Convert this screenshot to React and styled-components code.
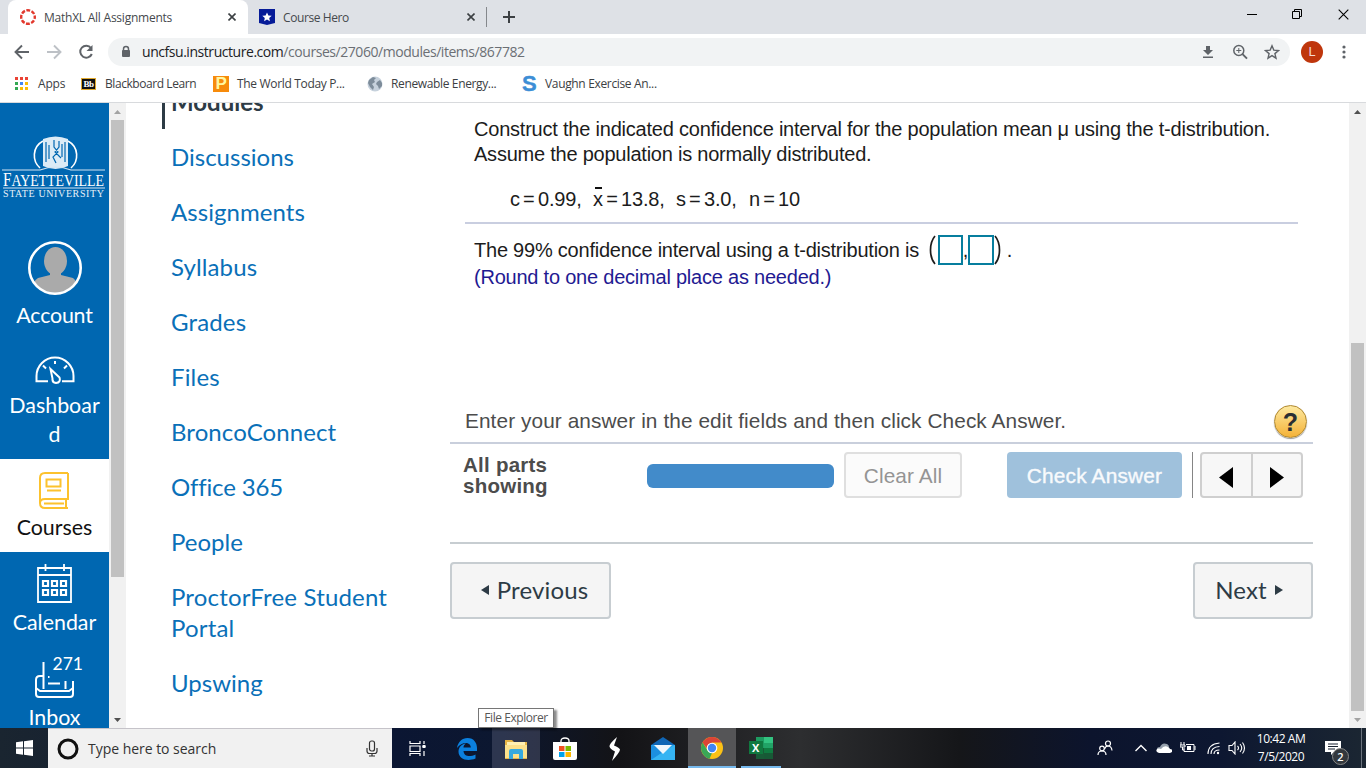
import React from 'react'
import styled, { createGlobalStyle } from 'styled-components'

const GlobalStyle = createGlobalStyle`
    * { box-sizing: border-box; }
    body {
        margin: 0;
        overflow: hidden;
        background: #fff;
    }
    button { font: inherit; margin: 0; padding: 0; }
    svg { display: block; flex: none; }
`
const Screen = styled.div`
    display: flex;
    flex-direction: column;
    width: 1366px;
    height: 768px;
    overflow: hidden;
    font-family: "Open Sans", "Noto Sans", sans-serif;
    white-space: nowrap;
`

/* browser */
const TabStrip = styled.header`
    display: flex;
    height: 34px;
    background: #dee1e6;
`
const Tab = styled.div`
    display: flex;
    align-items: center;
    width: ${p => p.$width}px;
    height: 34px;
    padding: 0 ${p => p.$active ? 12 : 11}px 0 ${p => p.$active ? 12 : 11}px;
    margin-left: ${p => p.$active ? 8 : 0}px;
    border-radius: 8px 8px 0 0;
    background: ${p => p.$active ? '#fff' : 'transparent'};
    color: #45494d;
    font-size: 12px;
    letter-spacing: ${p => p.$spacing}px;
`
const TabTitle = styled.span`
    flex: 1;
    margin-left: 8px;
`
const NewTab = styled.div`
    display: flex;
    align-items: center;
    height: 20px;
    margin-top: 7px;
    padding-left: 16px;
    border-left: 1px solid #85888c;
`
const WindowButtons = styled.div`
    display: flex;
    gap: 35px;
    margin-left: auto;
    padding: 9px 17px 0 0;
`
const Toolbar = styled.div`
    display: flex;
    align-items: center;
    height: 36px;
    padding: 0 14px;
`
const NavButtons = styled.div`
    display: flex;
    width: 94px;
    gap: 16px;
`
const AddressBar = styled.div`
    display: flex;
    align-items: center;
    width: 1182px;
    height: 28px;
    padding: 0 10px 0 12px;
    border-radius: 14px;
    background: #f1f3f4;
    color: #6b6f74;
    font-size: 14px;
    line-height: 18px;
    letter-spacing: -.45px;
    b { color: #202124; font-weight: 400; }
`
const Url = styled.span`
    flex: 1;
    margin: 0 0 1px 10px;
`
const AddressActions = styled.div`
    display: flex;
    gap: 16px;
`
const Avatar = styled.div`
    width: 22px;
    height: 22px;
    margin: 0 13px 0 11px;
    border-radius: 50%;
    background: #bf360c;
    color: #f3dcd4;
    font: 13px/22px Roboto, sans-serif;
    text-align: center;
`
const Bookmarks = styled.div`
    display: flex;
    align-items: center;
    height: 33px;
    padding: 0 0 5px 15px;
    border-bottom: 1px solid #d8dadd;
`
const Bookmark = styled.div`
    display: flex;
    align-items: center;
    gap: ${p => p.$gap || 8}px;
    width: ${p => p.$width}px;
    color: #3c4043;
    font-size: 12px;
    letter-spacing: ${p => p.$spacing}px;
`
const BbLogo = styled.span`
    width: 15px;
    height: 12px;
    border: 1px solid #e0a92e;
    background: #111;
    color: #fff;
    font: bold 9px/10px "Liberation Serif", serif;
    letter-spacing: -.5px;
    text-align: center;
`
const PearsonLogo = styled.span`
    width: 16px;
    height: 16px;
    background: #f78b0b;
    color: #fff7a0;
    font: bold 17px/16px "Liberation Sans", sans-serif;
    text-align: center;
`
const SLogo = styled.span`
    width: 15px;
    color: #3d8ed6;
    font: bold 22px/18px "Liberation Sans", sans-serif;
    letter-spacing: 0;
    -webkit-text-stroke: .4px #3d8ed6;
`

/* page */
const Page = styled.div`
    display: flex;
    height: 625px;
    overflow: hidden;
`
const GlobalNav = styled.nav`
    width: 109px;
    background: #0067b1;
    color: #fff;
    font: 21.4px/29px Lato, sans-serif;
    text-align: center;
`
const University = styled.div`
    height: 131px;
    padding-top: 33px;
    svg { margin: auto; }
`
const NavItem = styled.a`
    display: flex;
    flex-direction: column;
    align-items: center;
    height: ${p => p.$height}px;
    padding-top: ${p => p.$top}px;
    background: ${p => p.$active ? '#fff' : 'transparent'};
    color: ${p => p.$active ? '#111' : '#fff'};
    letter-spacing: ${p => p.$spacing || 0}px;
`
const NavText = styled.span`
    width: 92px;
    margin-top: ${p => p.$gap}px;
    text-align: center;
`
const InboxIcon = styled.div`
    position: relative;
`
const Badge = styled.span`
    position: absolute;
    top: -8px;
    left: 18px;
    font-size: 17.5px;
    line-height: 22px;
`
const Scroll = styled.div`
    display: flex;
    flex-direction: column;
    align-items: center;
    width: 17px;
    background: #f1f1f1;
`
const ScrollArrow = styled.div`
    display: flex;
    align-items: center;
    justify-content: center;
    width: 17px;
    height: 17px;
`
const Thumb = styled.div`
    width: 13px;
    height: ${p => p.$height}px;
    margin-top: ${p => p.$top}px;
    margin-bottom: auto;
    background: #c1c1c1;
`
const CourseMenu = styled.nav`
    display: flex;
    flex-direction: column;
    width: 324px;
    padding-left: 36px;
    font: 24px/31px Lato, sans-serif;
`
const MenuLink = styled.a`
    padding: 12px 0 12px 6px;
    border-left: 3px solid ${p => p.$active ? '#2d3b45' : 'transparent'};
    color: ${p => p.$active ? '#2d3b45' : '#0a70b8'};
    font-weight: ${p => p.$active ? 700 : 400};
    margin-top: ${p => p.$active ? -29 : 0}px;
    letter-spacing: ${p => p.$spacing || 0}px;
    white-space: pre;
`
const Main = styled.main`
    width: 863px;
    margin-right: auto;
    color: #1c1c1c;
    font: 20px/25px "Liberation Sans", Arial, sans-serif;
`
const Question = styled.section`
    height: 121px;
    margin: 0 15px;
    padding: 14px 9px 0;
    border-bottom: 2px solid #c9cee0;
`
const Line = styled.p`
    margin: 0;
    letter-spacing: ${p => p.$spacing || 0}px;
`
const Given = styled.div`
    display: flex;
    margin: 20px 0 0 36px;
    letter-spacing: -.12px;
    word-spacing: -2.2px;
`
const Value = styled.span`
    width: ${p => p.$width}px;
`
// x with the bar of a sample mean above it
const Mean = styled.span`
    position: relative;
    &::before {
        content: "";
        position: absolute;
        top: -1px;
        left: 2px;
        width: 7px;
        height: 2px;
        background: #111;
    }
`
const Answer = styled.section`
    height: 175px;
    padding: 10px 24px;
`
const AnswerLine = styled.div`
    display: flex;
    align-items: center;
    height: 32px;
`
const Bracket = styled.svg`
    width: 7px;
    height: 30px;
    margin: 0 ${p => p.$close ? 0 : 2}px 0 ${p => p.$close ? 0 : -1}px;
    transform: ${p => p.$close ? 'scaleX(-1)' : 'none'};
    fill: none;
    stroke: #1c1c1c;
    stroke-width: 1.7;
`
const Field = styled.input`
    width: ${p => p.$width}px;
    height: 30px;
    margin: 0;
    padding: 0;
    border: 2px solid #077e9e;
    background: #fff;
`
const Round = styled(Line)`
    color: #1f1a92;
    margin-top: -1px;
`
const Instruction = styled.div`
    display: flex;
    align-items: center;
    justify-content: space-between;
    height: 45px;
    padding: 1px 6px 0 15px;
    border-bottom: 2px solid #c9cfdc;
    color: #4c4c4c;
    font-size: 20.8px;
    letter-spacing: .09px;
`
const InstructionText = styled.span`
    margin-bottom: 2px;
`
const Help = styled.span`
    width: 33px;
    height: 33px;
    border: 1px solid #b0882e;
    border-radius: 50%;
    background: linear-gradient(#fde9a0, #f4b238);
    box-shadow: 0 1px 1px #999;
    color: #292e33;
    font: bold 25px/32px "Liberation Sans", sans-serif;
    text-align: center;
    letter-spacing: 0;
`
const Controls = styled.div`
    display: flex;
    height: 98px;
    padding: 8px 10px 0 13px;
    font-size: 20.8px;
`
const Parts = styled.strong`
    width: 184px;
    padding-top: 2px;
    color: #4c4c4c;
    font-size: 20.5px;
    line-height: 21px;
    letter-spacing: .25px;
`
const Progress = styled.div`
    width: 187px;
    height: 24px;
    margin: 12px 10px 0 0;
    border-radius: 6px;
    background: #428bca;
`
const ClearButton = styled.button`
    width: 118px;
    height: 46px;
    border: 2px solid #dfdfdf;
    border-radius: 4px;
    background: #fbfbfb;
    color: #949494;
    letter-spacing: .1px;
`
const CheckButton = styled.button`
    width: 175px;
    height: 46px;
    margin-left: 45px;
    border: 0;
    border-radius: 4px;
    background: #9fc1dc;
    color: #f8fafc;
    letter-spacing: .2px;
    -webkit-text-stroke: .4px #f8fafc;
`
const Divider = styled.div`
    width: 1px;
    height: 46px;
    margin: 0 7px 0 10px;
    background: #858585;
`
const Pager = styled.div`
    display: flex;
    width: 103px;
    height: 46px;
    border: 2px solid #cfcfcf;
    border-radius: 4px;
    background: #f7f7f7;
`
const PagerButton = styled.div`
    display: flex;
    flex: 1;
    align-items: center;
    justify-content: center;
    padding-top: 4px;
    & + & { border-left: 2px solid #cfcfcf; }
`
const Sequence = styled.footer`
    display: flex;
    justify-content: space-between;
    padding-top: 18px;
    border-top: 2px solid #c7cdd1;
`
const SequenceButton = styled.button`
    display: flex;
    align-items: center;
    justify-content: center;
    gap: 8px;
    width: ${p => p.$width}px;
    height: 57px;
    padding: 0 ${p => p.$right || 0}px 2px ${p => p.$left || 0}px;
    border: 2px solid #c7cdd1;
    border-radius: 4px;
    background: #f5f5f5;
    color: #2d3b45;
    font: 24px/30px Lato, sans-serif;
    letter-spacing: .15px;
`

/* taskbar */
const Taskbar = styled.div`
    position: relative;
    display: flex;
    height: 40px;
    background: linear-gradient(90deg, #1a2530 0, #0b1633 392px, #0c1730 500px, #131316 620px, #2d2e30 800px, #151619 960px, #0c142d 1090px, #0d1731 1220px, #1b2632 1366px);
    color: #fff;
`
const Start = styled.div`
    display: flex;
    align-items: center;
    justify-content: center;
    width: 48px;
`
const Search = styled.div`
    display: flex;
    align-items: center;
    width: 344px;
    padding: 0 14px 0 9px;
    border-top: 1px solid #c5c3c9;
    background: #f1f1f1;
    color: #333;
    font-size: 14px;
    letter-spacing: -.03px;
`
const SearchText = styled.span`
    flex: 1;
    margin-left: 9px;
`
const TaskButton = styled.div`
    display: flex;
    align-items: center;
    justify-content: center;
    width: ${p => p.$width || 48}px;
    margin-left: ${p => p.$left || 1}px;
    padding-top: ${p => p.$open ? 2 : 1}px;
    border-bottom: ${p => p.$open ? '2px solid #76b9ed' : 0};
    background: ${p => p.$shade || 'transparent'};
`
const Tray = styled.div`
    display: flex;
    align-items: center;
    margin-left: auto;
`
const TrayIcons = styled.div`
    display: flex;
    align-items: center;
    gap: 8px;
    padding-right: 2px;
`
const Clock = styled.div`
    width: 64px;
    font-size: 12px;
    line-height: 18px;
    letter-spacing: -.45px;
    text-align: center;
`
const Notice = styled.div`
    position: relative;
    width: 36px;
    margin-left: 12px;
    padding-right: 10px;
`
const Count = styled.span`
    position: absolute;
    top: 7px;
    left: 7px;
    width: 17px;
    height: 17px;
    border: 1px solid #888;
    border-radius: 50%;
    background: #33383d;
    font-size: 11px;
    font-weight: 600;
    line-height: 15px;
    text-align: center;
`
const ShowDesktop = styled.div`
    width: 5px;
    height: 40px;
    border-left: 1px solid #6b737d;
`
const Tooltip = styled.div`
    position: absolute;
    top: -20px;
    left: 478px;
    width: 76px;
    height: 20px;
    border: 1px solid #767676;
    background: #fff;
    box-shadow: 3px 2px 2px rgba(0, 0, 0, .45);
    color: #575757;
    font-size: 12px;
    line-height: 18px;
    letter-spacing: -.45px;
    text-align: center;
`

const Cross = ({ size = 8, width = 1.6, color = '#3c4043' }) => (
    <svg width={size} height={size} viewBox="0 0 8 8">
        <path d="M.5.5l7 7M7.5.5l-7 7" stroke={color} strokeWidth={width} />
    </svg>
)
const Triangle = ({ dir, width, height, color }) => (
    <svg width={width} height={height} viewBox="0 0 10 10" preserveAspectRatio="none">
        <path
            fill={color}
            d={{ up: 'M0 10L5 0l5 10z', down: 'M0 0l5 10L10 0z', left: 'M10 0v10L0 5z', right: 'M0 0v10l10-5z' }[dir]}
        />
    </svg>
)

const Browser = () => (
  <>
    <TabStrip>
        <Tab $active $width={240} $spacing={-.24}>
            <svg width="16" height="16" viewBox="0 0 16 16">
                <circle cx="8" cy="8" r="6.8" fill="none" stroke="#e2382d" strokeWidth="2.4" strokeDasharray="3.9 1.44" strokeDashoffset="1.9" />
            </svg>
            <TabTitle>MathXL All Assignments</TabTitle>
            <Cross />
        </Tab>
        <Tab $width={238} $spacing={-.4}>
            <svg width="16" height="16" viewBox="0 0 16 16">
                <path d="M0 0h16v14l-8 2-8-2z" fill="#061b98" />
                <path d="M8 3.5l1.4 3 3.3.3-2.5 2.2.7 3.2L8 10.5l-2.9 1.7.7-3.2-2.5-2.2 3.3-.3z" fill="#fff" />
            </svg>
            <TabTitle>Course Hero</TabTitle>
            <Cross />
        </Tab>
        <NewTab>
            <svg width="12" height="12"><path d="M6 0v12M0 6h12" stroke="#3c4043" strokeWidth="2" /></svg>
        </NewTab>
        <WindowButtons>
            <svg width="10" height="10"><path d="M0 5.5h10" stroke="#000" /></svg>
            <svg width="11" height="11"><path d="M.5 2.5h7v7h-7zM2.5 2.5v-2h7v7h-2" fill="none" stroke="#000" /></svg>
            <Cross size={11} width=".8" color="#000" />
        </WindowButtons>
    </TabStrip>
    <Toolbar>
        <NavButtons>
            <svg width="16" height="16"><path d="M15 8H2M8 1.5L1.5 8 8 14.5" fill="none" stroke="#5f6368" strokeWidth="1.9" /></svg>
            <svg width="16" height="16"><path d="M1 8h13M8 1.5L14.5 8 8 14.5" fill="none" stroke="#bdc1c6" strokeWidth="1.9" /></svg>
            <svg width="16" height="16"><path d="M13 4A6 6 0 1 0 13.8 10" fill="none" stroke="#5f6368" strokeWidth="2" /><path d="M14.5 1v6h-6z" fill="#5f6368" /></svg>
        </NavButtons>
        <AddressBar>
            <svg width="12" height="14"><path d="M3.5 6V4a2.5 2.5 0 0 1 5 0v2" fill="none" stroke="#5f6368" strokeWidth="1.5" /><rect x="2" y="5" width="8" height="7" rx="1" fill="#5f6368" /></svg>
            <Url><b>uncfsu.instructure.com</b>/courses/27060/modules/items/867782</Url>
            <AddressActions>
                <svg width="16" height="16"><path d="M6 2h4v4h3l-5 5-5-5h3zM3 12.5h10V14H3z" fill="#5f6368" /></svg>
                <svg width="16" height="16"><circle cx="6.8" cy="6.5" r="5" fill="none" stroke="#5f6368" strokeWidth="1.5" /><path d="M10.5 10.2l4.5 4.5" stroke="#5f6368" strokeWidth="1.9" /><path d="M6.8 4v5M4.3 6.5h5" stroke="#5f6368" /></svg>
                <svg width="16" height="16"><path d="M8 1.8l1.8 4.3 4.7.4-3.6 3.1 1.1 4.6L8 11.7l-4 2.5 1.1-4.6-3.6-3.1 4.7-.4z" fill="none" stroke="#5f6368" strokeWidth="1.4" /></svg>
            </AddressActions>
        </AddressBar>
        <Avatar>L</Avatar>
        <svg width="16" height="14" fill="#5f6368"><circle cx="8" cy="2" r="1.6" /><circle cx="8" cy="7" r="1.6" /><circle cx="8" cy="12" r="1.6" /></svg>
    </Toolbar>
    <Bookmarks>
        <Bookmark $width={66} $gap={10} $spacing={-.2}>
            <svg width="13" height="13">
                {['#ea4335', '#ea4335', '#ea4335', '#34a853', '#4285f4', '#fbbc05', '#34a853', '#fbbc05', '#fbbc05'].map((c, i) => (
                    <rect key={i} x={(i % 3) * 5} y={Math.floor(i / 3) * 5} width="3" height="3" fill={c} />
                ))}
            </svg>
            Apps
        </Bookmark>
        <Bookmark $width={132} $gap={9} $spacing={-.43}><BbLogo>Bb</BbLogo>Blackboard Learn</Bookmark>
        <Bookmark $width={154} $spacing={-.33}><PearsonLogo>P</PearsonLogo>The World Today P...</Bookmark>
        <Bookmark $width={155} $spacing={-.36}>
            <svg width="16" height="16">
                <circle cx="8" cy="8" r="7.5" fill="#c6d1dc" />
                <path d="M2 4l4-3 3 1-2 2 1 2-3 2 2 3-1 3-3-3-2-4zM10 6l3-2 2 3v3l-3 3-1-3-2-2z" fill="#7d8c9a" />
            </svg>
            Renewable Energy...
        </Bookmark>
        <Bookmark $spacing={-.34}><SLogo>S</SLogo>Vaughn Exercise An...</Bookmark>
    </Bookmarks>
  </>
)

const Sidebar = () => (
  <GlobalNav>
    <University>
        <svg width="105" height="64" viewBox="0 0 105 64">
            <path d="M38 32C30 25 30 11 41 5M69 32c8-7 8-21-3-27" fill="none" stroke="#fff" strokeWidth="1.6" />
            <path d="M41 3q12.5-5 25 0v27q-12.5 6-25 0z" fill="#dcebf6" />
            <path d="M44 6v20M47 9v14M63 6v20M60 8v13M52 4v7l4 5-5 5 3 6M57 5v6l-4 5 6 6" fill="none" stroke="#0067b1" strokeWidth="1.2" />
            <path d="M0 34h38q15.5-6 31 0h34M1 52h102" fill="none" stroke="#d3e4f2" strokeWidth="1.2" />
            <text x="1" y="49.5" fill="#fff" fontFamily="Liberation Serif, serif" fontSize="18.5" textLength="101" lengthAdjust="spacingAndGlyphs">F<tspan fontSize="17">AYETTEVILLE</tspan></text>
            <text x="1" y="60.5" fill="#e8f1f8" fontFamily="Liberation Serif, serif" fontSize="10" textLength="101">STATE UNIVERSITY</text>
        </svg>
    </University>
    <NavItem $height={110} $top={7} $spacing={-.2}>
        <svg width="54" height="54" viewBox="0 0 54 54">
            <defs><clipPath id="face"><circle cx="27" cy="27" r="25" /></clipPath></defs>
            <g clipPath="url(#face)" fill="#aaa">
                <ellipse cx="27.5" cy="20" rx="11.5" ry="14" />
                <path d="M22 30h11v4l12 3q5 3 5 17H4q0-14 6-17l12-3z" />
            </g>
            <circle cx="27" cy="27" r="25.7" fill="none" stroke="#fff" strokeWidth="2.6" />
        </svg>
        <NavText $gap={6}>Account</NavText>
    </NavItem>
    <NavItem $height={115} $top={12}>
        <svg width="40" height="28" viewBox="0 0 40 28" fill="none" stroke="#fff" strokeWidth="2">
            <path d="M13 25.2H1.5V20a18.3 18.3 0 0 1 37 0v5.2H27M20 5v3M8 9.5l3 3M32 9.5l-3 3" />
            <path d="M15.5 13l9 8.500q1.500 5-3.500 5.500-4-.5-3.500-4.500z" />
        </svg>
        <NavText $gap={7}>Dashboar<br />d</NavText>
    </NavItem>
    <NavItem $active $height={93} $top={13}>
        <svg width="31" height="37" viewBox="0 0 31 37" fill="none" stroke="#fcc22d" strokeWidth="2">
            <path d="M29 1H6Q1 1 1 6v25q0 5 5 5h23M29 1v26H6q-5 0-5 4M27 27v9M5 31.5h20" />
            <path d="M7.5 7.5h14v7h-14zM8 18.5h14" />
        </svg>
        <NavText $gap={4}>Courses</NavText>
    </NavItem>
    <NavItem $height={97} $top={12}>
        <svg width="36" height="39" viewBox="0 0 36 39" fill="none" stroke="#fff" strokeWidth="1.8">
            <path d="M1 4h33v34H1zM1 11h33M8.5 0v7M27 0v7" />
            {[0, 1, 2].map(i => <path key={i} strokeWidth="2.2" d={`M${6 + i * 9} 17h5v5h-5zM${6 + i * 9} 26h5v5h-5z`} />)}
        </svg>
        <NavText $gap={5}>Calendar</NavText>
    </NavItem>
    <NavItem $height={79} $top={12}>
        <InboxIcon>
            <svg width="40" height="37" viewBox="0 0 40 37" fill="none" stroke="#fff" strokeWidth="2">
                <path d="M8.5 1v27M30.5 20v8M1 27l4 3h29l4-3M8 15H5q-4 0-4 4v14q0 3 3 3h31q3 0 3-3V20M13 22.5h12M13 16h1.5" />
            </svg>
            <Badge>271</Badge>
        </InboxIcon>
        <NavText $gap={5}>Inbox</NavText>
    </NavItem>
  </GlobalNav>
)

const Scrollbar = ({ up, down, top, height }) => (
    <Scroll>
        <ScrollArrow><Triangle dir="up" width={7} height={4} color={up} /></ScrollArrow>
        <Thumb $top={top} $height={height} />
        <ScrollArrow><Triangle dir="down" width={7} height={4} color={down} /></ScrollArrow>
    </Scroll>
)

const links = [
    { name: 'Discussions' },
    { name: 'Assignments', spacing: .05 },
    { name: 'Syllabus', spacing: .12 },
    { name: 'Grades', spacing: .15 },
    { name: 'Files', spacing: .15 },
    { name: 'BroncoConnect', spacing: .08 },
    { name: 'Office 365', spacing: -.15 },
    { name: 'People' },
    { name: 'ProctorFree Student\nPortal', spacing: .17 },
    { name: 'Upswing' },
]

const Exercise = () => (
  <Main>
    <Question>
        <Line $spacing={-.215}>Construct the indicated confidence interval for the population mean μ using the t-distribution.</Line>
        <Line $spacing={-.23}>Assume the population is normally distributed.</Line>
        <Given>
            <Value $width={83}>c = 0.99,</Value>
            <Value $width={83}><Mean>x</Mean> = 13.8,</Value>
            <Value $width={73}>s = 3.0,</Value>
            <Value $width={60}>n = 10</Value>
        </Given>
    </Question>
    <Answer>
        <AnswerLine>
            <Line $spacing={-.225}>The 99% confidence interval using a t-distribution is&nbsp;&nbsp;</Line>
            <Bracket viewBox="0 0 7 30"><path d="M6 1C0 8 0 22 6 29" /></Bracket>
            <Field $width={25} aria-label="lower limit" />
            <Line>,</Line>
            <Field $width={26} aria-label="upper limit" />
            <Bracket $close viewBox="0 0 7 30"><path d="M6 1C0 8 0 22 6 29" /></Bracket>
            <Line>&nbsp;.</Line>
        </AnswerLine>
        <Round $spacing={-.22}>(Round to one decimal place as needed.)</Round>
    </Answer>
    <Instruction>
        <InstructionText>Enter your answer in the edit fields and then click Check Answer.</InstructionText>
        <Help>?</Help>
    </Instruction>
    <Controls>
        <Parts>All parts<br />showing</Parts>
        <Progress />
        <ClearButton>Clear All</ClearButton>
        <CheckButton>Check Answer</CheckButton>
        <Divider />
        <Pager>
            <PagerButton><Triangle dir="left" width={14} height={21} color="#000" /></PagerButton>
            <PagerButton><Triangle dir="right" width={14} height={21} color="#000" /></PagerButton>
        </Pager>
    </Controls>
    <Sequence>
        <SequenceButton $width={161} $left={8}><Triangle dir="left" width={8} height={10} color="#2d3b45" />Previous</SequenceButton>
        <SequenceButton $width={120} $right={8}>Next<Triangle dir="right" width={8} height={10} color="#2d3b45" /></SequenceButton>
    </Sequence>
  </Main>
)

const WindowsTaskbar = () => (
  <Taskbar>
    <Start>
        <svg width="17" height="16" fill="#fff"><path d="M0 2.3l7-1v6.2H0zM8 1.2L17 0v7.5H8zM0 8.5h7v6.2l-7-1zM8 8.5h9V16l-9-1.2z" /></svg>
    </Start>
    <Search>
        <svg width="22" height="22"><circle cx="11" cy="11" r="9" fill="none" stroke="#111" strokeWidth="3" /></svg>
        <SearchText>Type here to search</SearchText>
        <svg width="12" height="17" fill="none" stroke="#333" strokeWidth="1.2"><rect x="3.5" y="1" width="5" height="10" rx="2" /><path d="M1 8v3q0 2.5 2.5 2.5h5Q11 13.5 11 11V8M6 13.5V16M3 16h6" /></svg>
    </Search>
    <TaskButton $width={49}>
        <svg width="17" height="15" fill="none" stroke="#fff" strokeWidth="1.2"><path d="M1 0v2.5h10V0M1 5h10v5.5H1zM1 15v-2.500h10V15M15 0v3M15 10v5M13.500 5.500h3" /><path d="M13.5 4h3v3h-3z" fill="#fff" stroke="none" /></svg>
    </TaskButton>
    <TaskButton>
        <svg width="22" height="22" viewBox="0 0 22 22"><path d="M1 10C2 4 6 0 11.5 0 18 0 21 5 21 10v3H7.5c.5 6 7 6 12 3.5v4C11 24 2.5 21 2.5 13.5 2.5 9 6 6 10 5.500 7.500 7 7.500 9 7.500 9.500h7.300C14.800 3.500 6 3 1 10z" fill="#0b80df" /></svg>
    </TaskButton>
    <TaskButton $shade="rgba(110, 115, 140, .34)">
        <svg width="22" height="20" viewBox="0 0 22 20"><path d="M0 1h7l2 2h13v17H0z" fill="#e6b445" /><path d="M2 3h18v16H2z" fill="#fff0b3" /><path d="M0 6h22v13H0z" fill="#fce18b" /><path d="M4 20v-8q0-2 2-2h10q2 0 2 2v8h-4v-5H8v5z" fill="#35a9df" /></svg>
    </TaskButton>
    <TaskButton>
        <svg width="24" height="24" viewBox="0 0 24 24"><path d="M8 6V4q0-3 4-3t4 3v2" fill="none" stroke="#fff" strokeWidth="1.3" /><path d="M0 5h24v16q0 2-2 2H2q-2 0-2-2z" fill="#fff" /><path d="M6 9h5.5v5H6z" fill="#f15022" /><path d="M12.5 9H18v5h-5.5z" fill="#7eb900" /><path d="M6 15h5.5v5H6z" fill="#00a3ee" /><path d="M12.5 15H18v5h-5.5z" fill="#ffb800" /></svg>
    </TaskButton>
    <TaskButton>
        <svg width="13" height="24" viewBox="0 0 13 24"><path d="M9 0Q1 7 1.500 9.500 2 12 7 14.500L4 24Q12 15 12 12.500 11 10.500 6 8.500z" fill="#fff" /></svg>
    </TaskButton>
    <TaskButton>
        <svg width="24" height="23" viewBox="0 0 24 23"><path d="M0 8l12-8 12 8z" fill="#1066b5" /><path d="M0 8h24v15H0z" fill="#25a5ec" /><path d="M0 8v15l15-9.5z" fill="#1c8fe0" /><path d="M24 8v15H0l12-8z" fill="#36b4f3" /><path d="M3 8h18l-9 9z" fill="#f0f7fc" /></svg>
    </TaskButton>
    <TaskButton $open $shade="#555557">
        <svg width="22" height="22" viewBox="0 0 22 22"><circle cx="11" cy="11" r="11" fill="#fbc116" /><path d="M1.5 5.5A11 11 0 0 1 20.5 5.5H11L7 13z" fill="#db4437" /><path d="M1.5 5.5L7 14l4 2-2.5 5.7A11 11 0 0 1 1.5 5.5z" fill="#3aa757" /><circle cx="11" cy="11" r="5.3" fill="#fff" /><circle cx="11" cy="11" r="4.2" fill="#4285f4" /></svg>
    </TaskButton>
    <TaskButton $open $width={40} $left={5}>
        <svg width="24" height="22" viewBox="0 0 24 22"><path d="M7 0h8v22H7z" fill="#1e9c61" /><path d="M15 0h9v6h-9z" fill="#33c481" /><path d="M15 6h9v5h-9z" fill="#21a366" /><path d="M7 11h8v11H7z" fill="#185c37" /><path d="M15 11h9v5h-9z" fill="#107c41" /><path d="M15 16h9v6h-9z" fill="#175a36" /><path d="M0 4h14v13H0z" fill="#10793f" /><text x="3" y="15" fill="#fff" fontFamily="Open Sans, sans-serif" fontSize="11" fontWeight="700">X</text></svg>
    </TaskButton>
    <Tray>
        <TrayIcons>
            <svg width="30" height="16" fill="none" stroke="#fff" strokeWidth="1.2"><circle cx="12" cy="3.5" r="2.5" /><path d="M8.5 9q1-3 3.500-3 3.500 0 4 4.500" /><circle cx="6" cy="8.5" r="2.3" /><path d="M2 15q0-4 4-4t4 4" /></svg>
            <svg width="14" height="12" fill="none" stroke="#fff" strokeWidth="1.4"><path d="M1.5 9L7 3.5 12.5 9" /></svg>
            <svg width="16" height="12"><path d="M4 5q2-5 7-3 2 1 2 3l-8 4-4-2q0-2 3-2z" fill="#96a0ac" /><path d="M3 11q-4-1-2-4 2-1 4 0 3-4 7-2 1 0 2 2 3 0 2 3L14 11z" fill="#fff" /></svg>
            <svg width="16" height="12" fill="none" stroke="#fff"><path d="M6 2.5h8v7H4V6M15 4v4M1 0v3M4 0v3M0 3h5v2H0zM2.5 5v3h2" /><path d="M7 4h4v4H7z" fill="#fff" stroke="none" /></svg>
            <svg width="16" height="14" fill="none" stroke="#fff" strokeWidth="1.1"><path d="M4 13Q4 3 15.5 2M7 13q0-7 8.5-7.5M10 13q0-4 5.5-4" /><circle cx="14" cy="12" r="1.2" fill="#fff" stroke="none" /></svg>
            <svg width="19" height="14" fill="none" stroke="#fff" strokeWidth="1.1"><path d="M1 4.5h3L7 1v12L4 9.5H1zM9.5 5q2 2 0 4M12 3q3.5 4 0 8M14.5 1.5q4 5.5 0 11" /></svg>
        </TrayIcons>
        <Clock>10:42 AM<br />7/5/2020</Clock>
        <Notice>
            <svg width="17" height="14"><path d="M0 0h16v11H9l-3 3v-3H0z" fill="#fff" /><path d="M3 3h10M3 5.5h10M3 8h7" stroke="#172130" /></svg>
            <Count>2</Count>
        </Notice>
        <ShowDesktop />
    </Tray>
    <Tooltip>File Explorer</Tooltip>
  </Taskbar>
)

const App = () => (
  <Screen>
    <GlobalStyle />
    <Browser />
    <Page>
        <Sidebar />
        <Scrollbar up="#a3a3a3" down="#505050" top={0} height={457} />
        <CourseMenu>
            <MenuLink $active>Modules</MenuLink>
            {links.map(link => <MenuLink key={link.name} $spacing={link.spacing}>{link.name}</MenuLink>)}
        </CourseMenu>
        <Exercise />
        <Scrollbar up="#505050" down="#a3a3a3" top={223} height={368} />
    </Page>
    <WindowsTaskbar />
  </Screen>
)

export default App
